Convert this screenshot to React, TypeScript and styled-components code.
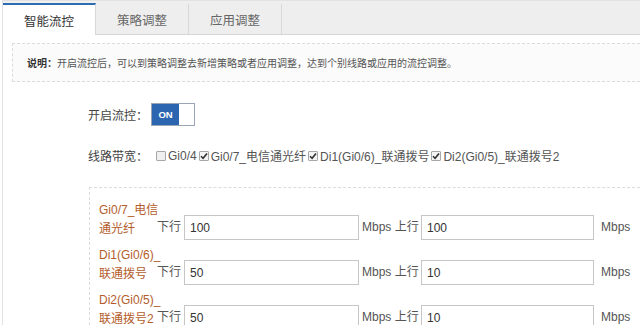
import React from "react";
import styled, { createGlobalStyle } from "styled-components";

const Global = createGlobalStyle`
  html, body { margin: 0; padding: 0; background: #fff; overflow: hidden; }
  body {
    font-family: "Liberation Sans", Arial, "Noto Sans CJK SC", sans-serif;
    font-size: 12px;
    color: #555;
  }
  * { box-sizing: border-box; }
`;

const Panel = styled.div`
  margin-left: 2px;
  border-left: 1px solid #e2e2e2;
  border-top: 1px solid #e2e2e2;
  width: 638px;
  height: 325px;
  overflow: hidden;
`;

const TabBar = styled.div`
  display: flex;
  height: 34px;
  padding-top: 2px;
  background: #efefef;
  border-bottom: 1px solid #d6d6d6;
`;

const Tab = styled.div<{ $active?: boolean }>`
  width: 93px;
  height: ${(p) => (p.$active ? "32px" : "31px")};
  display: flex;
  align-items: center;
  justify-content: center;
  font-size: 12.5px;
  color: ${(p) => (p.$active ? "#333" : "#666")};
  background: ${(p) => (p.$active ? "#fff" : "#eeeeee")};
  border-top: 2px solid ${(p) => (p.$active ? "#2d6cb3" : "transparent")};
  border-right: 1px solid #d8d8d8;
  position: relative;
  z-index: 1;
`;

const TabFill = styled.div`
  flex: 1;
  height: 31px;
  background: #eeeeee;
`;

const Notice = styled.div`
  margin: 8px 0 0 9px;
  height: 39px;
  border: 1px dashed #dcdcdc;
  border-right: none;
  background: #fbfbfb;
  display: flex;
  align-items: center;
  padding-left: 14px;
  font-size: 10px;
  color: #555;
  white-space: nowrap;
`;

const NoticeTitle = styled.b`
  color: #333;
`;

const Form = styled.div`
  padding-left: 85px;
`;

const Line = styled.div<{ $top: number }>`
  display: flex;
  align-items: center;
  margin-top: ${(p) => p.$top}px;
  color: #555;
  white-space: nowrap;
`;

const FieldLabel = styled.span`
  font-size: 12px;
  width: 63px;
  flex: none;
  color: #444;
`;

const Toggle = styled.div`
  display: flex;
  width: 44px;
  height: 23px;
  border: 1px solid #9aa6b5;
  background: #fff;
`;

const ToggleOn = styled.div`
  width: 27px;
  background: #2c66b0;
  color: #fff;
  font-weight: bold;
  font-size: 9.5px;
  display: flex;
  align-items: center;
  justify-content: center;
`;

const Spacer = styled.span`
  width: 4px;
  flex: none;
`;

const CheckItem = styled.label`
  display: inline-flex;
  align-items: center;
  font-size: 12px;
  color: #555;
  margin-right: 1px;
`;

const Box = styled.span<{ $checked?: boolean }>`
  width: 10px;
  height: 10px;
  border: 1px solid #a8a8a8;
  background: ${(p) => (p.$checked ? "#f4f4f4" : "#f0f0f0")};
  margin: 0 2px 0 1px;
  display: inline-flex;
  align-items: center;
  justify-content: center;
  border-radius: 1px;
`;

const Section = styled.div`
  margin: 23px 0 0 1px;
  border-top: 1px dashed #dcdcdc;
  border-left: 1px dashed #dcdcdc;
  padding: 12px 0 0 9px;
  display: flex;
  flex-direction: column;
  gap: 5px;
`;

const Row = styled.div`
  display: flex;
  align-items: flex-end;
  height: 40px;
  white-space: nowrap;
`;

const RowLabel = styled.div`
  width: 58px;
  flex: none;
  color: #b45d2c;
  font-size: 12px;
  line-height: 18.5px;
  margin-bottom: 2px;
`;

const Text = styled.span<{ $w?: number; $pl?: number }>`
  font-size: 12px;
  color: #555;
  flex: none;
  width: ${(p) => (p.$w ? `${p.$w}px` : "auto")};
  padding-left: ${(p) => p.$pl ?? 0}px;
  line-height: 25px;
`;

const Input = styled.div<{ $w: number }>`
  width: ${(p) => p.$w}px;
  height: 25px;
  border: 1px solid #c6c6c6;
  background: #fff;
  flex: none;
  display: flex;
  align-items: center;
  padding-left: 5px;
  font-size: 12px;
  color: #333;
`;

const Check = () => (
  <svg width="8" height="8" viewBox="0 0 8 8">
    <path d="M1 4.2 L3.1 6.3 L7 1.4" stroke="#333" strokeWidth="1.6" fill="none" />
  </svg>
);

const rows = [
  { l1: "Gi0/7_电信", l2: "通光纤", down: "100", up: "100" },
  { l1: "Di1(Gi0/6)_", l2: "联通拨号", down: "50", up: "10" },
  { l1: "Di2(Gi0/5)_", l2: "联通拨号2", down: "50", up: "10" },
];

const lines = [
  { name: "Gi0/4", checked: false },
  { name: "Gi0/7_电信通光纤", checked: true },
  { name: "Di1(Gi0/6)_联通拨号", checked: true },
  { name: "Di2(Gi0/5)_联通拨号2", checked: true },
];

export default function App() {
  return (
    <>
      <Global />
      <Panel>
        <TabBar>
          <Tab $active>智能流控</Tab>
          <Tab>策略调整</Tab>
          <Tab>应用调整</Tab>
          <TabFill />
        </TabBar>
        <Notice>
          <NoticeTitle>说明：</NoticeTitle>
          开启流控后，可以到策略调整去新增策略或者应用调整，达到个别线路或应用的流控调整。
        </Notice>
        <Form>
          <Line $top={21}>
            <FieldLabel>开启流控：</FieldLabel>
            <Toggle>
              <ToggleOn>ON</ToggleOn>
            </Toggle>
          </Line>
          <Line $top={21}>
            <FieldLabel>线路带宽：</FieldLabel>
            <Spacer />
            {lines.map((c) => (
              <CheckItem key={c.name}>
                <Box $checked={c.checked}>{c.checked && <Check />}</Box>
                {c.name}
              </CheckItem>
            ))}
          </Line>
          <Section>
            {rows.map((r) => (
              <Row key={r.l1}>
                <RowLabel>
                  {r.l1}
                  <br />
                  {r.l2}
                </RowLabel>
                <Text $w={27}>下行</Text>
                <Input $w={175}>{r.down}</Input>
                <Text $w={62} $pl={3}>Mbps 上行</Text>
                <Input $w={173}>{r.up}</Input>
                <Text $pl={7}>Mbps</Text>
              </Row>
            ))}
          </Section>
        </Form>
      </Panel>
    </>
  );
}
